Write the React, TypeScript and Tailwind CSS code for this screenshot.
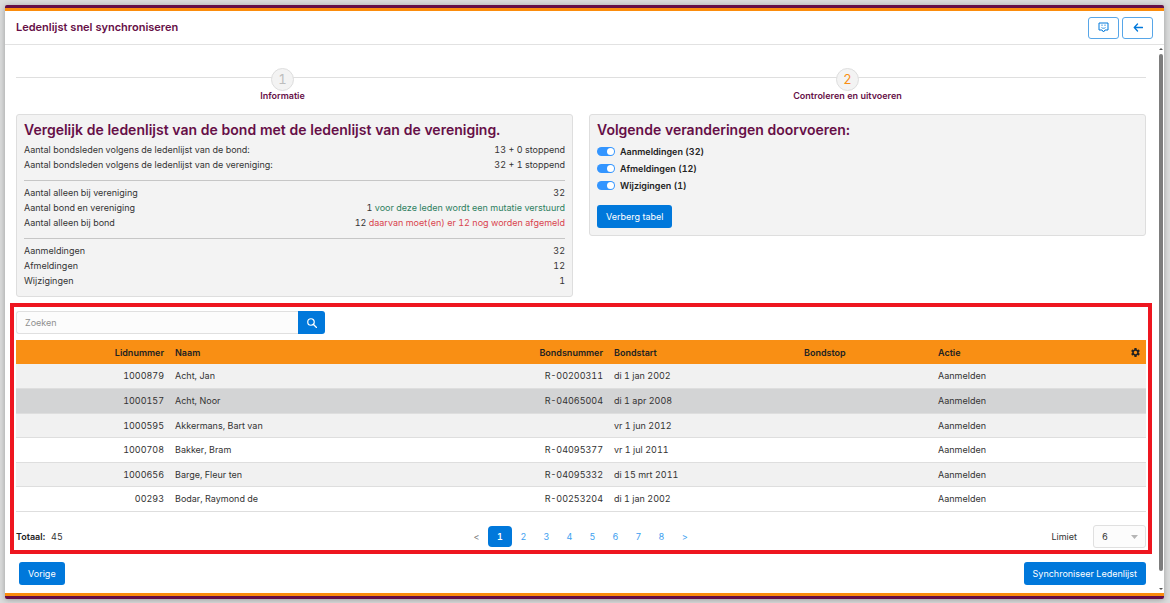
import React, { useState } from "react";
import { MdSettings } from "react-icons/md";

const members = [
  { id: "1000879", name: "Acht, Jan", bond: "R-00200311", start: "di 1 jan 2002" },
  { id: "1000157", name: "Acht, Noor", bond: "R-04065004", start: "di 1 apr 2008" },
  { id: "1000595", name: "Akkermans, Bart van", bond: "", start: "vr 1 jun 2012" },
  { id: "1000708", name: "Bakker, Bram", bond: "R-04095377", start: "vr 1 jul 2011" },
  { id: "1000656", name: "Barge, Fleur ten", bond: "R-04095332", start: "di 15 mrt 2011" },
  { id: "00293", name: "Bodar, Raymond de", bond: "R-00253204", start: "di 1 jan 2002" },
];

const primaryButton =
  "flex h-[23px] items-center justify-center rounded-[3px] bg-[#0078db] px-[9px] text-white";
const outlineButton =
  "flex h-[22px] w-[31px] items-center justify-center rounded-[3px] border border-[#57a6e8] bg-white text-[#0078db]";

function Step({ number, label, active }: { number: number; label: string; active?: boolean }) {
  return (
    <li className="flex flex-1 flex-col items-center">
      <span
        className={
          active
            ? "relative flex size-[23px] items-center justify-center rounded-full border border-[#dedede] bg-[#f3f3f3] text-[13px] text-[#f98f14]"
            : "relative flex size-[23px] items-center justify-center rounded-full border border-[#dedede] bg-[#f3f3f3] text-[13px] text-[#bdbdbd]"
        }
      >
        {number}
      </span>
      <span className="font-semibold leading-[10px] text-[#660f47]">{label}</span>
    </li>
  );
}

function Stat({ label, children }: { label: string; children: React.ReactNode }) {
  return (
    <div className="flex justify-between">
      <dt>{label}</dt>
      <dd>{children}</dd>
    </div>
  );
}

function Toggle({ label }: { label: string }) {
  const [on, setOn] = useState(true);
  return (
    <label className="flex h-[17px] items-center gap-[5px] font-semibold text-[#222]">
      <input
        type="checkbox"
        checked={on}
        onChange={() => setOn(!on)}
        className="flex h-[9px] w-[18px] appearance-none items-center justify-start rounded-full bg-[#b5b5b5] px-px before:size-[7px] before:rounded-full before:bg-white checked:justify-end checked:bg-[#3395ff]"
      />
      {label}
    </label>
  );
}

export default function App() {
  const [page, setPage] = useState(1);

  return (
    <div className="flex min-h-screen flex-col bg-[#dcdddd] px-[5px] pt-[5px] pb-1 font-['Inter','Liberation_Sans',sans-serif] text-[9px] leading-[15px] text-[#333] tabular-nums">
      <div className="mr-px flex flex-1 flex-col rounded-[2px] border-y-[3px] border-[#660f47] bg-white shadow-[0_1px_6px_rgba(0,0,0,0.3)]">
        <div className="flex flex-1 flex-col border-y-[3px] border-[#fb8c0c]">
          <header className="flex h-[34px] items-center justify-between border-b border-[#e2e2e2] px-[11px]">
            <h1 className="text-[11px] font-semibold text-[#660f47]">Ledenlijst snel synchroniseren</h1>
            <div className="flex gap-[3px]">
              <button aria-label="Feedback" className={outlineButton}>
                <svg viewBox="0 0 22 22" className="size-[11px]" fill="none" stroke="currentColor" strokeWidth="2">
                  <path d="M2 2h18v14h-6l-3 4-3-4H2z" strokeLinejoin="round" />
                  <path d="M8 5v3M14 5v3M7 11c1.500 2 6.500 2 8 0" strokeWidth="1.600" />
                </svg>
              </button>
              <button aria-label="Terug" className={outlineButton}>
                <svg viewBox="0 0 20 18" className="h-[9px] w-[10px]" fill="none" stroke="currentColor" strokeWidth="2.600">
                  <path d="M9 2 2.500 9 9 16M2.500 9H19" strokeLinecap="round" strokeLinejoin="round" />
                </svg>
              </button>
            </div>
          </header>

          <div className="flex flex-1">
            <main className="min-w-0 flex-1 pt-[23px] pr-[5px] pl-[11px]">
              <ol className="relative mr-[22px] -ml-4 flex before:absolute before:top-[9px] before:-right-4 before:left-4 before:h-px before:bg-[#dfdfdf]">
                <Step number={1} label="Informatie" />
                <Step number={2} label="Controleren en uitvoeren" active />
              </ol>

              <div className="mt-[13px] mr-[6px] grid grid-cols-2 items-start gap-4">
                <section className="rounded-[3px] border border-[#dedede] bg-[#f3f3f3] px-[7px] pt-[5px] pb-2">
                  <h2 className="text-[14px] leading-[20px] font-semibold text-[#660f47]">
                    Vergelijk de ledenlijst van de bond met de ledenlijst van de vereniging.
                  </h2>
                  <dl className="mt-[2px]">
                    <Stat label="Aantal bondsleden volgens de ledenlijst van de bond:">13 + 0 stoppend</Stat>
                    <Stat label="Aantal bondsleden volgens de ledenlijst van de vereniging:">32 + 1 stoppend</Stat>
                  </dl>
                  <hr className="mt-2 mb-1 border-[#c6c6c6]" />
                  <dl>
                    <Stat label="Aantal alleen bij vereniging">32</Stat>
                    <Stat label="Aantal bond en vereniging">
                      1 <span className="text-[#2d8060]">voor deze leden wordt een mutatie verstuurd</span>
                    </Stat>
                    <Stat label="Aantal alleen bij bond">
                      12 <span className="text-[#d9434e]">daarvan moet(en) er 12 nog worden afgemeld</span>
                    </Stat>
                  </dl>
                  <hr className="mt-2 mb-1 border-[#c6c6c6]" />
                  <dl>
                    <Stat label="Aanmeldingen">32</Stat>
                    <Stat label="Afmeldingen">12</Stat>
                    <Stat label="Wijzigingen">1</Stat>
                  </dl>
                </section>

                <section className="rounded-[3px] border border-[#dedede] bg-[#f3f3f3] px-[7px] pt-[5px] pb-[7px]">
                  <h2 className="text-[14px] leading-[20px] font-semibold text-[#660f47]">
                    Volgende veranderingen doorvoeren:
                  </h2>
                  <div className="mt-[3px]">
                    <Toggle label="Aanmeldingen (32)" />
                    <Toggle label="Afmeldingen (12)" />
                    <Toggle label="Wijzigingen (1)" />
                  </div>
                  <button className={`${primaryButton} mt-[11px]`}>Verberg tabel</button>
                </section>
              </div>

              <section className="mt-[6px] -ml-[6px] border-4 border-[#ee1620] px-[2px] pt-1 pb-[2px]">
                <form className="flex h-[23px] w-[309px]" onSubmit={(e) => e.preventDefault()}>
                  <input
                    type="search"
                    aria-label="Zoeken"
                    placeholder="Zoeken"
                    className="min-w-0 flex-1 rounded-l-[3px] border border-r-0 border-[#e0e0e0] bg-[#fcfcfc] px-2 placeholder:text-[#8f8f8f]"
                  />
                  <button
                    aria-label="Zoek"
                    className="flex w-[27px] items-center justify-center rounded-r-[3px] bg-[#0078db] text-white"
                  >
                    <svg viewBox="0 0 20 20" className="size-[10px]" fill="none" stroke="currentColor" strokeWidth="2.400">
                      <circle cx="8" cy="8" r="6.500" />
                      <path d="m13 13 6 6" strokeLinecap="round" />
                    </svg>
                  </button>
                </form>

                <table className="mt-[6px] w-full table-fixed border-collapse text-left">
                  <thead className="bg-[#f98f14] text-[#222]">
                    <tr className="h-6">
                      <th className="w-[153px] pr-[5px] text-right font-semibold">Lidnummer</th>
                      <th className="pl-[6px] font-semibold">Naam</th>
                      <th className="w-[110px] pr-[5px] text-right font-semibold">Bondsnummer</th>
                      <th className="w-[190px] pl-[6px] font-semibold">Bondstart</th>
                      <th className="w-[134px] pl-[6px] font-semibold">Bondstop</th>
                      <th className="w-[188px] pl-[6px] font-semibold">Actie</th>
                      <th className="w-[26px] pr-[5px]">
                        <button aria-label="Kolommen instellen" className="ml-auto block">
                          <MdSettings className="size-[11px]" />
                        </button>
                      </th>
                    </tr>
                  </thead>
                  <tbody>
                    {members.map((m) => (
                      <tr
                        key={m.id}
                        className={
                          m.id === "1000157"
                            ? "h-[25px] border-b border-[#dedede] bg-[#d3d4d5]"
                            : "h-6 border-b border-[#dedede] odd:bg-[#f1f1f1] even:h-[25px]"
                        }
                      >
                        <td className="pr-[5px] text-right">{m.id}</td>
                        <td className="pl-[6px]">{m.name}</td>
                        <td className="pr-[5px] text-right">{m.bond}</td>
                        <td className="pl-[6px]">{m.start}</td>
                        <td></td>
                        <td className="pl-[6px]">Aanmelden</td>
                        <td></td>
                      </tr>
                    ))}
                  </tbody>
                </table>

                <div className="mt-[13px] grid grid-cols-3 items-center">
                  <p>
                    <span className="mr-[6px] font-semibold text-[#222]">Totaal:</span>45
                  </p>
                  <nav aria-label="Pagina's" className="flex items-center justify-center text-[#3da0f0]">
                    <button className="h-[21px] w-[23px] text-[#777]" aria-label="Vorige pagina">&lt;</button>
                    {[1, 2, 3, 4, 5, 6, 7, 8].map((n) => (
                      <button
                        key={n}
                        onClick={() => setPage(n)}
                        className={
                          n === page
                            ? "h-[21px] w-6 rounded-[4px] bg-[#0078db] font-semibold text-white"
                            : "h-[21px] w-[23px]"
                        }
                      >
                        {n}
                      </button>
                    ))}
                    <button className="h-[21px] w-6" aria-label="Volgende pagina">&gt;</button>
                  </nav>
                  <div className="flex items-center justify-end gap-4">
                    <label htmlFor="limit">Limiet</label>
                    <div className="relative">
                      <select
                        id="limit"
                        className="block h-[23px] w-[53px] appearance-none rounded-[3px] border border-[#e0e0e0] bg-[#fcfcfc] pl-2"
                        defaultValue="6"
                      >
                        <option>6</option>
                        <option>12</option>
                        <option>24</option>
                      </select>
                      <svg viewBox="0 0 7 4" className="pointer-events-none absolute top-[10px] right-2 h-1 w-[7px] fill-[#b5b5b5]">
                        <path d="M0 0h7L3.500 4z" />
                      </svg>
                    </div>
                  </div>
                </div>
              </section>

              <footer className="mt-2 mr-[6px] mb-2 ml-[3px] flex justify-between">
                <button className={primaryButton}>Vorige</button>
                <button className={primaryButton}>Synchroniseer Ledenlijst</button>
              </footer>
            </main>

            <div aria-hidden="true" className="flex w-[7px] flex-col items-center py-[3px]">
              <svg viewBox="0 0 4 2" className="h-[2px] w-1 fill-[#555]">
                <path d="M0 2h4L2 0z" />
              </svg>
              <div className="mt-1 mb-[17px] w-1 flex-1 rounded-full bg-[#7d7d7d]" />
              <svg viewBox="0 0 4 2" className="h-[2px] w-1 fill-[#555]">
                <path d="M0 0h4L2 2z" />
              </svg>
            </div>
          </div>
        </div>
      </div>
    </div>
  );
}
